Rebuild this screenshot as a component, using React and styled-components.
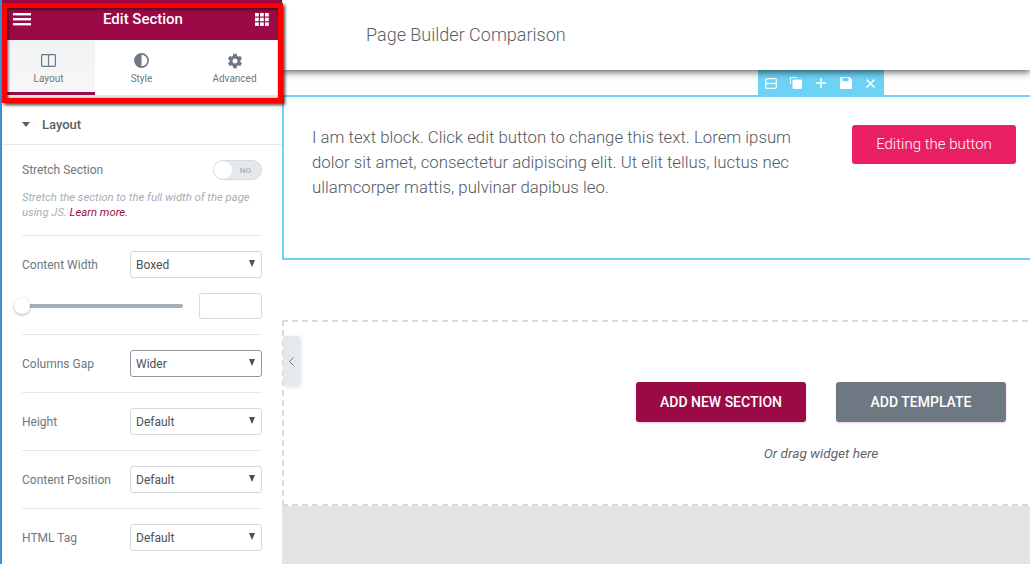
import React from "react";
import styled, { createGlobalStyle } from "styled-components";
import { IoSettingsSharp } from "react-icons/io5";

const GlobalStyle = createGlobalStyle`
  html, body {
    margin: 0;
    padding: 0;
    background: #fff;
    font-family: Roboto, "Liberation Sans", sans-serif;
  }
  * { box-sizing: border-box; }
`;

const Page = styled.div`
  position: relative;
  display: flex;
  width: 1030px;
  height: 564px;
  overflow: hidden;
  background: #fff;
`;

/* ---------- sidebar ---------- */
const Sidebar = styled.aside`
  position: relative;
  z-index: 3;
  flex: 0 0 282px;
  height: 564px;
  background: #fff;
  border-left: 2px solid #3d8fd1;
  color: #6d7882;
`;

const Header = styled.header`
  display: flex;
  align-items: center;
  justify-content: space-between;
  height: 40px;
  padding: 0 13px 1px 11px;
  background: #9b0a46;
  color: #fff;
`;

const HeaderTitle = styled.h1`
  margin: 0 0 2px;
  font-size: 15px;
  font-weight: 500;
  line-height: 36px;
`;

const Tabs = styled.nav`
  display: flex;
  height: 58px;
  padding: 0 1px 3px 0;
  border-bottom: 3px solid #e6e9ec;
`;

const Tab = styled.div`
  display: flex;
  flex: 1;
  flex-direction: column;
  align-items: center;
  gap: 5px;
  padding-top: 13px;
  margin-bottom: -3px;
  font-size: 10px;
  color: #6d7882;
  background: ${(p) => (p.$active ? "linear-gradient(#f1f2f3, #f6f7f7)" : "#fff")};
  border-bottom: 3px solid ${(p) => (p.$active ? "#9b0a46" : "transparent")};
`;

const TabIcon = styled.span`
  display: flex;
  align-items: center;
  justify-content: center;
  height: 15px;
`;

const SectionHead = styled.div`
  display: flex;
  align-items: center;
  gap: 12px;
  height: 47px;
  padding: 6px 0 0 20px;
  font-size: 13px;
  font-weight: 500;
  color: #556068;
  border-bottom: 1px solid #e6e9ec;
`;

const HeadCaret = styled.span`
  width: 0;
  height: 0;
  border-left: 4px solid transparent;
  border-right: 4px solid transparent;
  border-top: 5px solid #556068;
`;

const Controls = styled.div`
  padding: 0 20px;
`;

const Group = styled.div`
  padding: 15px 0;
  border-bottom: ${(p) => (p.$last ? "none" : "1px solid #e6e9ec")};
`;

const Row = styled.div`
  display: flex;
  align-items: center;
  justify-content: space-between;
  height: ${(p) => p.$h || "27px"};
`;

const Label = styled.span`
  font-size: 12px;
  color: #6d7882;
`;

const Switch = styled.div`
  position: relative;
  display: flex;
  align-items: center;
  justify-content: flex-end;
  width: 49px;
  height: 20px;
  padding-right: 10px;
  border: 1px solid #d5dadf;
  border-radius: 10px;
  background: #e6e9ec;
  font-size: 8px;
  font-weight: 500;
  color: #a4afb7;
`;

const Knob = styled.span`
  position: absolute;
  left: 0;
  top: 0;
  width: 18px;
  height: 18px;
  border-radius: 50%;
  background: #fff;
`;

const Help = styled.p`
  margin: 10px 0 0;
  font-size: 11.3px;
  font-style: italic;
  line-height: 15px;
  color: #a4afb7;
  a {
    color: #9b0a46;
    text-decoration: none;
  }
`;

const SelectBox = styled.div`
  display: flex;
  align-items: center;
  justify-content: space-between;
  width: 132px;
  height: 27px;
  padding: 0 5px;
  border: 1px solid ${(p) => (p.$focus ? "#8d98a2" : "#d5dadf")};
  border-radius: 3px;
  font-size: 12px;
  color: #495157;
  background: #fff;
`;

const Caret = styled.span`
  width: 0;
  height: 0;
  margin: 0 1px 3px 0;
  border-left: 3.5px solid transparent;
  border-right: 3.5px solid transparent;
  border-top: 7px solid #495157;
`;

const SliderRow = styled.div`
  display: flex;
  align-items: center;
  justify-content: space-between;
  margin-top: 15px;
`;

const Track = styled.div`
  position: relative;
  width: 161px;
  height: 4px;
  border-radius: 2px;
  background: #a4afb7;
`;

const Thumb = styled.span`
  position: absolute;
  left: -8px;
  top: -6px;
  width: 16px;
  height: 16px;
  border-radius: 50%;
  background: #fff;
  box-shadow: 0 1px 3px rgba(0, 0, 0, 0.3);
`;

const NumberBox = styled.div`
  width: 63px;
  height: 26px;
  border: 1px solid #d5dadf;
  border-radius: 3px;
`;

/* ---------- main column ---------- */
const Main = styled.main`
  position: relative;
  display: flex;
  flex: 1;
  flex-direction: column;
  min-width: 0;
`;

const TopBar = styled.div`
  position: relative;
  z-index: 2;
  display: flex;
  align-items: center;
  height: 70px;
  padding: 0 0 2px 84px;
  background: #fff;
  box-shadow: 0 2px 7px rgba(0, 0, 0, 0.65);
  font-size: 18px;
  font-weight: 300;
  color: #5a6068;
`;

const EditedSection = styled.section`
  position: relative;
  display: flex;
  justify-content: space-between;
  height: 165px;
  margin-top: 25px;
  padding: 28px 14px 0 28px;
  border: 2px solid #6dd3f5;
  border-right: none;
`;

const SectionBar = styled.div`
  position: absolute;
  z-index: 1;
  top: -27px;
  left: 474px;
  display: grid;
  grid-template-columns: repeat(5, 25px);
  align-items: center;
  justify-items: center;
  width: 126px;
  height: 26px;
  background: #6dd3f5;
  color: #fff;
`;

const BodyText = styled.p`
  width: 490px;
  margin: 0;
  font-size: 16.8px;
  font-weight: 300;
  line-height: 25px;
  color: #54595f;
`;

const PinkButton = styled.div`
  display: flex;
  align-items: center;
  justify-content: center;
  width: 164px;
  height: 39px;
  padding-bottom: 2px;
  border-radius: 3px;
  background: #ea1f63;
  color: #fff;
  font-size: 15px;
  font-weight: 300;
`;

const DropZone = styled.section`
  position: relative;
  display: flex;
  flex-direction: column;
  align-items: center;
  height: 186px;
  margin-top: 60px;
  padding: 62px 0 0 330px;
  background-image:
    repeating-linear-gradient(90deg, #d5dadf 0 6px, transparent 6px 10px),
    repeating-linear-gradient(90deg, #d5dadf 0 6px, transparent 6px 10px),
    repeating-linear-gradient(180deg, #d5dadf 0 6px, transparent 6px 10px);
  background-size: 100% 2px, 100% 2px, 2px 100%;
  background-position: 0 0, 0 100%, 0 0;
  background-repeat: no-repeat;
`;

const Buttons = styled.div`
  display: flex;
  gap: 30px;
`;

const AddButton = styled.div`
  display: flex;
  align-items: center;
  justify-content: center;
  width: 170px;
  height: 40px;
  border-radius: 3px;
  background: ${(p) => p.$bg};
  box-shadow: 0 1px 2px rgba(236, 31, 99, 0.25);
  color: #fff;
  font-size: 14px;
  font-weight: 500;
`;

const DragHint = styled.p`
  margin: 23px 0 0;
  font-size: 13.6px;
  font-style: italic;
  color: #5f666d;
`;

const Grey = styled.div`
  flex: 1;
  background: #e3e3e3;
`;

/* things lying over the page */
const Collapse = styled.div`
  position: absolute;
  z-index: 2;
  left: 1px;
  top: 336px;
  display: flex;
  align-items: center;
  justify-content: center;
  width: 16px;
  height: 50px;
  background: #e6e9ec;
  box-shadow: 2px 1px 4px rgba(0, 0, 0, 0.12);
  color: #6d7882;
`;

const RedFrame = styled.div`
  position: absolute;
  z-index: 5;
  left: 2px;
  top: 3px;
  width: 281px;
  height: 100px;
  border: 5px solid #fe0000;
  box-shadow: 2px 2px 3px rgba(0, 0, 0, 0.75), inset 1px 1px 3px rgba(0, 0, 0, 0.75);
  pointer-events: none;
`;

/* ---------- icons ---------- */
const Burger = () => (
  <svg width="18" height="13" viewBox="0 0 18 13" fill="#fff">
    <rect y="0" width="18" height="2.4" />
    <rect y="5" width="18" height="2.4" />
    <rect y="10" width="18" height="2.4" />
  </svg>
);

const Apps = () => (
  <svg width="14" height="13" viewBox="0 0 14 13" fill="#fff">
    {[0, 5, 10].flatMap((x) =>
      [0, 4.7, 9.4].map((y) => <rect key={`${x}-${y}`} x={x} y={y} width="3.8" height="3.5" />)
    )}
  </svg>
);

const ColumnsIcon = () => (
  <svg width="15" height="13" viewBox="0 0 15 13" fill="none" stroke="#6d7882" strokeWidth="1.2">
    <rect x="0.6" y="0.6" width="13.8" height="11.8" rx="0.8" />
    <path d="M7.5 0.6v11.8" />
  </svg>
);

const HalfCircle = () => (
  <svg width="15" height="15" viewBox="0 0 15 15">
    <circle cx="7.5" cy="7.5" r="6.6" fill="#fff" stroke="#6d7882" strokeWidth="1.6" />
    <path d="M7.5 1a6.5 6.5 0 0 0 0 13z" fill="#6d7882" />
  </svg>
);

const SplitIcon = () => (
  <svg width="12" height="11" viewBox="0 0 12 11" fill="none" stroke="#fff" strokeWidth="1.3">
    <rect x="0.7" y="0.7" width="10.6" height="9.6" rx="1.2" />
    <path d="M0.7 5.5h10.6" />
  </svg>
);

const CopyIcon = () => (
  <svg width="12" height="12" viewBox="0 0 12 12" fill="#fff">
    <path d="M0 1.2C0 .5.5 0 1.2 0H7v1H1v6H0z" />
    <rect x="2.5" y="2.5" width="9.5" height="9.5" rx="1.2" />
  </svg>
);

const PlusIcon = () => (
  <svg width="10" height="10" viewBox="0 0 10 10" stroke="#fff" strokeWidth="1.5">
    <path d="M5 0v10M0 5h10" />
  </svg>
);

const SaveIcon = () => (
  <svg width="12" height="12" viewBox="0 0 12 12" fill="#fff">
    <path d="M1 0h8.5L12 2.5V11a1 1 0 0 1-1 1H1a1 1 0 0 1-1-1V1a1 1 0 0 1 1-1zm1.5 1v3.2h6V1z" fillRule="evenodd" />
  </svg>
);

const CloseIcon = () => (
  <svg width="9" height="9" viewBox="0 0 9 9" stroke="#fff" strokeWidth="1.5">
    <path d="M.5.5l8 8M8.5.5l-8 8" />
  </svg>
);

const Chevron = () => (
  <svg width="5" height="9" viewBox="0 0 5 9" fill="none" stroke="#6d7882" strokeWidth="1">
    <path d="M4.5.5l-4 4 4 4" />
  </svg>
);

const SelectRow = ({ label, value, focus }) => (
  <Row>
    <Label>{label}</Label>
    <SelectBox $focus={focus}>
      {value}
      <Caret />
    </SelectBox>
  </Row>
);

export default function App() {
  return (
    <>
      <GlobalStyle />
      <Page>
        <Sidebar>
          <Header>
            <Burger />
            <HeaderTitle>Edit Section</HeaderTitle>
            <Apps />
          </Header>
          <Tabs>
            <Tab $active>
              <TabIcon>
                <ColumnsIcon />
              </TabIcon>
              Layout
            </Tab>
            <Tab>
              <TabIcon>
                <HalfCircle />
              </TabIcon>
              Style
            </Tab>
            <Tab>
              <TabIcon>
                <IoSettingsSharp size={16} color="#6d7882" />
              </TabIcon>
              Advanced
            </Tab>
          </Tabs>
          <SectionHead>
            <HeadCaret />
            Layout
          </SectionHead>
          <Controls>
            <Group>
              <Row $h="20px">
                <Label>Stretch Section</Label>
                <Switch>
                  <Knob />
                  NO
                </Switch>
              </Row>
              <Help>
                Stretch the section to the full width of the page using JS. <a>Learn more.</a>
              </Help>
            </Group>
            <Group>
              <SelectRow label="Content Width" value="Boxed" />
              <SliderRow>
                <Track>
                  <Thumb />
                </Track>
                <NumberBox />
              </SliderRow>
            </Group>
            <Group>
              <SelectRow label="Columns Gap" value="Wider" focus />
            </Group>
            <Group>
              <SelectRow label="Height" value="Default" />
            </Group>
            <Group>
              <SelectRow label="Content Position" value="Default" />
            </Group>
            <Group $last>
              <SelectRow label="HTML Tag" value="Default" />
            </Group>
          </Controls>
        </Sidebar>
        <Main>
          <TopBar>Page Builder Comparison</TopBar>
          <EditedSection>
            <SectionBar>
              <SplitIcon />
              <CopyIcon />
              <PlusIcon />
              <SaveIcon />
              <CloseIcon />
            </SectionBar>
            <BodyText>
              I am text block. Click edit button to change this text. Lorem ipsum dolor sit amet,
              consectetur adipiscing elit. Ut elit tellus, luctus nec ullamcorper mattis, pulvinar
              dapibus leo.
            </BodyText>
            <PinkButton>Editing the button</PinkButton>
          </EditedSection>
          <DropZone>
            <Buttons>
              <AddButton $bg="#9b0a46">ADD NEW SECTION</AddButton>
              <AddButton $bg="#6d7882">ADD TEMPLATE</AddButton>
            </Buttons>
            <DragHint>Or drag widget here</DragHint>
          </DropZone>
          <Grey />
          <Collapse>
            <Chevron />
          </Collapse>
        </Main>
        <RedFrame />
      </Page>
    </>
  );
}
